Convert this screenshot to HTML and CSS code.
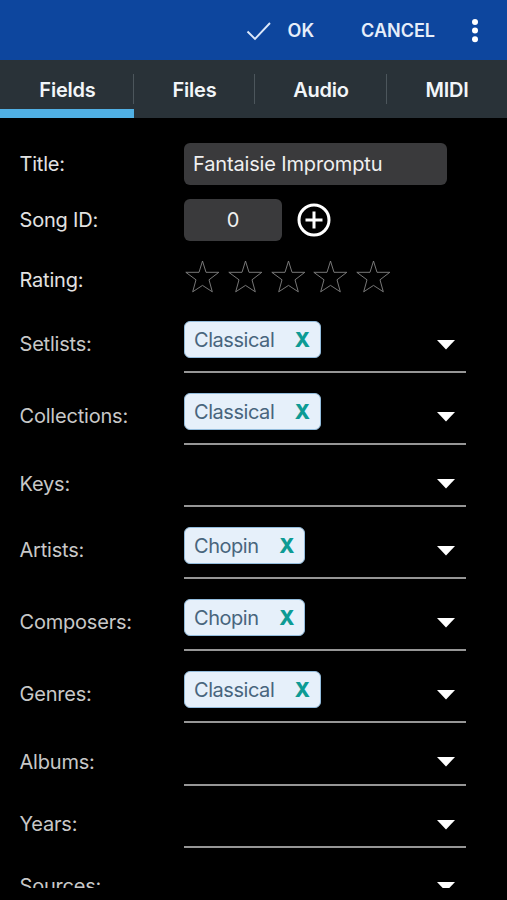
FILE: index.html
```html
<!DOCTYPE html>
<html lang="en">
<head>
<meta charset="utf-8">
<meta name="viewport" content="width=device-width, initial-scale=1">
<title>Song fields</title>
<link rel="stylesheet" href="styles.css">
</head>
<body>
<header class="bar">
  <button class="action ok"><svg class="check" viewBox="0 0 26 20"><path d="M1.5 10.5 9 18 24 2"/></svg><span>OK</span></button>
  <button class="action cancel">CANCEL</button>
  <button class="action more" aria-label="More"><svg viewBox="0 0 8 26"><circle cx="4" cy="4" r="3"/><circle cx="4" cy="12.6" r="3"/><circle cx="4" cy="21.2" r="3"/></svg></button>
</header>
<nav class="tabs">
  <a class="tab active">Fields</a>
  <a class="tab">Files</a>
  <a class="tab">Audio</a>
  <a class="tab">MIDI</a>
</nav>
<svg class="defs"><defs>
  <path id="star" d="M18.5 2 22 13.3H34.8L25 20.8 28.3 32.8 18.5 26.4 8.7 32.8 12 20.8 1.8 13.3H15Z"/>
  <path id="arrow" d="M0 0H18L9 9.5Z"/>
</defs></svg>
<main class="form">
  <div class="field title"><span class="label">Title:</span><span class="input">Fantaisie Impromptu</span></div>
  <div class="field song"><span class="label">Song ID:</span><span class="input number">0</span>
    <svg class="add" viewBox="0 0 34 34"><circle cx="17" cy="17" r="15"/><path d="M17 8.5V25.5M8.5 17H25.5"/></svg></div>
  <div class="field rating"><span class="label">Rating:</span>
    <span class="stars"><svg><use href="#star"/></svg><svg><use href="#star"/></svg><svg><use href="#star"/></svg><svg><use href="#star"/></svg><svg><use href="#star"/></svg></span></div>
  <div class="row"><span class="label">Setlists:</span><div class="select"><span class="chip">Classical<b>X</b></span><svg class="arrow"><use href="#arrow"/></svg></div></div>
  <div class="row"><span class="label">Collections:</span><div class="select"><span class="chip">Classical<b>X</b></span><svg class="arrow"><use href="#arrow"/></svg></div></div>
  <div class="row empty"><span class="label">Keys:</span><div class="select"><svg class="arrow"><use href="#arrow"/></svg></div></div>
  <div class="row"><span class="label">Artists:</span><div class="select"><span class="chip">Chopin<b>X</b></span><svg class="arrow"><use href="#arrow"/></svg></div></div>
  <div class="row"><span class="label">Composers:</span><div class="select"><span class="chip">Chopin<b>X</b></span><svg class="arrow"><use href="#arrow"/></svg></div></div>
  <div class="row"><span class="label">Genres:</span><div class="select"><span class="chip">Classical<b>X</b></span><svg class="arrow"><use href="#arrow"/></svg></div></div>
  <div class="row empty"><span class="label">Albums:</span><div class="select"><svg class="arrow"><use href="#arrow"/></svg></div></div>
  <div class="row empty"><span class="label">Years:</span><div class="select"><svg class="arrow"><use href="#arrow"/></svg></div></div>
  <div class="row empty"><span class="label">Sources:</span><div class="select"><svg class="arrow"><use href="#arrow"/></svg></div></div>
</main>
</body>
</html>
```
FILE: styles.css
```css
* { box-sizing: border-box; }
html, body { height: 100%; }
body {
  margin: 0;
  background: #000;
  color: #e2e2e2;
  font: 20px/24px Inter, "Liberation Sans", sans-serif;
  letter-spacing: -0.2px;
  overflow: hidden;
}
svg { display: block; flex: none; }
.defs { width: 0; height: 0; position: absolute; }

.bar {
  display: flex;
  align-items: center;
  justify-content: flex-end;
  height: 60px;
  padding: 2px 28px 0 0;
  background: #0d469e;
}
.action {
  display: flex;
  align-items: center;
  padding: 0;
  border: 0;
  background: none;
  color: #e6eefa;
  font: 600 18px/24px Inter, sans-serif;
}
.check {
  width: 26px;
  height: 20px;
  margin-right: 16px;
  fill: none;
  stroke: #dce8fa;
  stroke-width: 1.9;
}
.cancel { margin: 0 36px 0 47px; }
.more svg { width: 8px; height: 26px; fill: #fff; }

.tabs {
  display: grid;
  grid-template-columns: 134px 121px 132px 120px;
  height: 58px;
  background: #293238;
}
.tab {
  position: relative;
  display: flex;
  align-items: center;
  justify-content: center;
  padding-top: 2px;
  color: #f2f6f9;
  font-weight: 600;
}
.tab:not(:last-child)::after {
  content: "";
  position: absolute;
  right: 0;
  top: 14px;
  width: 1px;
  height: 30px;
  background: #4c565c;
}
.active { padding-left: 1px; box-shadow: inset 0 -9px #50b0e4; }

.form { height: 770px; padding: 24px 0 0 19.5px; overflow: hidden; }
.label { width: 164.5px; flex: none; }
.field { display: flex; align-items: center; height: 43px; }
.input {
  width: 263px;
  height: 42px;
  padding: 9px;
  border-radius: 6px;
  background: #3a3a3c;
  color: #f0f0f0;
  letter-spacing: -0.15px;
}
.song { margin-top: 13px; }
.number { width: 98px; text-align: center; }
.add { width: 34px; height: 34px; margin-left: 15px; fill: none; stroke: #fff; stroke-width: 3; }
.rating { margin-top: 17px; }
.stars { display: flex; gap: 6.8px; margin-top: -6px; }
.stars svg { width: 36px; height: 36px; fill: none; stroke: #858585; stroke-width: 0.9; }

.row { display: flex; height: 72px; }
.row .label { padding-top: 31px; color: #c8c8c8; }
.select {
  display: flex;
  width: 281.5px;
  padding: 20px 10.5px 0 0;
  border-bottom: 2px solid #969696;
}
.empty { height: 62.3px; }
.empty .label { padding-top: 26.5px; }
.chip {
  display: flex;
  align-items: center;
  height: 37px;
  padding: 0 10px 0 9px;
  border: 1px solid #93bcdc;
  border-radius: 6px;
  background: #e6f0fa;
  color: #48657d;
  letter-spacing: -0.45px;
}
.chip b { margin-left: 20.5px; color: #0d9b94; font-weight: 800; }
.arrow { width: 18px; height: 10px; margin: 19px 0 0 auto; fill: #fff; }
.empty .arrow { margin-top: 14px; }
```
